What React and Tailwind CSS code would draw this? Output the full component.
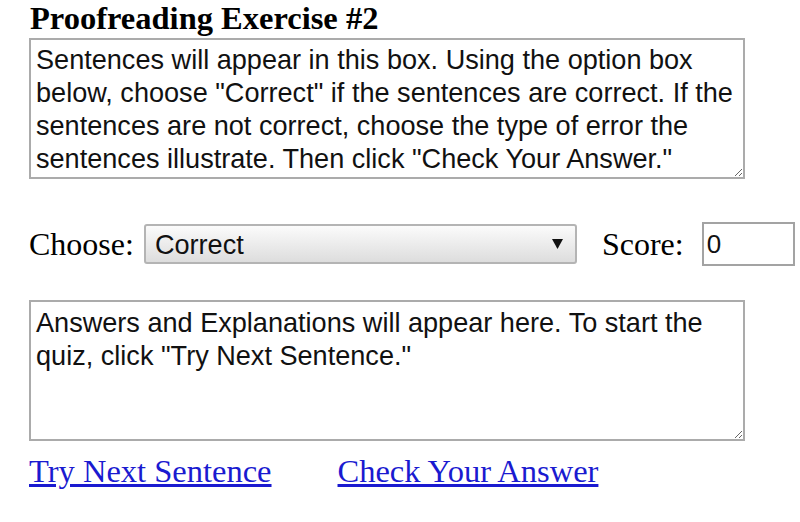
import React, { useState } from "react";

const SERIF = "font-['Liberation_Serif','Times_New_Roman',serif]";
const SANS = "font-['Liberation_Sans',Arial,sans-serif]";

export default function App() {
  const [choice, setChoice] = useState("Correct");
  const [score] = useState("0");

  return (
    <div className={`min-h-[522px] bg-white pl-[29px] text-black ${SERIF}`}>
      <h1 className="m-0 pl-[1px] text-[32.5px] font-bold leading-[36px]">
        Proofreading Exercise #2
      </h1>

      <textarea
        readOnly
        className={`mt-[2px] block h-[141px] w-[716px] overflow-hidden border-2 border-[#ababab] bg-white pt-[3px] pb-[4px] pl-[5px] pr-[2px] text-[27.1px] leading-[33px] text-[#111] outline-none ${SANS}`}
        value={
          'Sentences will appear in this box. Using the option box below, choose "Correct" if the sentences are correct. If the sentences are not correct, choose the type of error the sentences illustrate. Then click "Check Your Answer."'
        }
      />

      <div className="mt-[43px] flex h-[44px] items-center">
        <span className="mr-[10px] text-[32px] leading-[32px]">Choose:</span>
        <div className="relative">
          <select
            value={choice}
            onChange={(e) => setChoice(e.target.value)}
            className={`block h-[40px] w-[433px] appearance-none rounded-[3px] border-2 border-[#b4b4b4] bg-gradient-to-b from-[#fbfbfb] to-[#dddddd] pl-[9px] pt-[2px] text-[27.1px] leading-[32px] text-[#111] outline-none ${SANS}`}
          >
            <option>Correct</option>
            <option>Fragment</option>
            <option>Run-on</option>
            <option>Comma Splice</option>
          </select>
          <svg
            className="pointer-events-none absolute right-[14px] top-[15px]"
            width="11"
            height="10"
            viewBox="0 0 11 10"
          >
            <path d="M0 0 H11 L5.5 10 Z" fill="#111" />
          </svg>
        </div>
        <span className="ml-[25px] mr-[18px] text-[32px] leading-[32px]">
          Score:
        </span>
        <input
          readOnly
          value={score}
          className={`block h-[44px] w-[93px] border-2 border-[#a3a3a3] bg-white pl-[3px] text-[26px] text-[#111] outline-none ${SANS}`}
        />
      </div>

      <textarea
        readOnly
        className={`mt-[34px] block h-[141px] w-[716px] overflow-hidden border-2 border-[#ababab] bg-white pt-[4px] pb-[4px] pl-[5px] pr-[2px] text-[27.1px] leading-[33px] text-[#111] outline-none ${SANS}`}
        value={
          'Answers and Explanations will appear here. To start the quiz, click "Try Next Sentence."'
        }
      />

      <div className="mt-[14px] flex gap-[66px] text-[32.5px] leading-[32px]">
        <a href="#" className="text-[#1a1ad0] underline">
          Try Next Sentence
        </a>
        <a href="#" className="text-[#1a1ad0] underline">
          Check Your Answer
        </a>
      </div>
    </div>
  );
}
